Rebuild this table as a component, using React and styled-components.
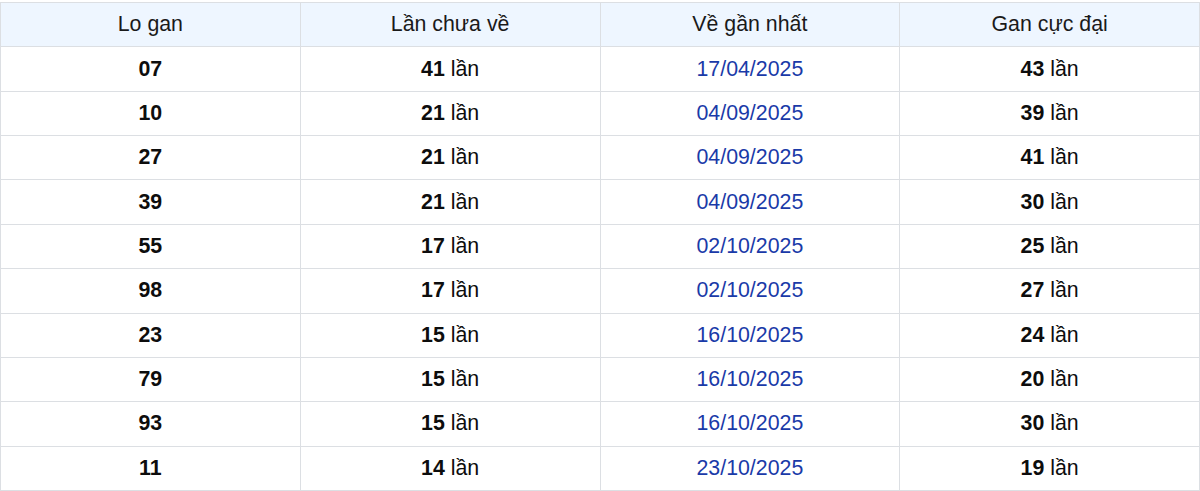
import React from "react";
import styled, { createGlobalStyle } from "styled-components";

const Global = createGlobalStyle`
  html, body { margin: 0; padding: 0; background: #ffffff; }
  body { font-family: "Liberation Sans", Arial, sans-serif; }
`;

const Wrap = styled.div`
  padding-top: 2px;
`;

const Table = styled.table`
  width: 1200px;
  border-collapse: collapse;
  table-layout: fixed;
  font-family: "Liberation Sans", Arial, sans-serif;
  font-size: 21.33px;
  color: #111111;
`;

const Row = styled.tr`
  height: 44.36px;
`;

const HeadCell = styled.th`
  background: #eef6ff;
  font-weight: 400;
  color: #1a1a1a;
  border: 1px solid #dcdfe3;
  text-align: center;
  vertical-align: middle;
  padding: 0;
`;

const Cell = styled.td`
  border: 1px solid #dcdfe3;
  text-align: center;
  vertical-align: middle;
  padding: 0;
  color: ${(p) => (p.$date ? "#1a3aa8" : "#0d0d0d")};
  font-weight: ${(p) => (p.$bold ? 700 : 400)};
`;

const Num = styled.b`
  font-weight: 700;
`;

const rows = [
  ["07", "41", "17/04/2025", "43"],
  ["10", "21", "04/09/2025", "39"],
  ["27", "21", "04/09/2025", "41"],
  ["39", "21", "04/09/2025", "30"],
  ["55", "17", "02/10/2025", "25"],
  ["98", "17", "02/10/2025", "27"],
  ["23", "15", "16/10/2025", "24"],
  ["79", "15", "16/10/2025", "20"],
  ["93", "15", "16/10/2025", "30"],
  ["11", "14", "23/10/2025", "19"],
];

export default function App() {
  return (
    <>
      <Global />
      <Wrap>
        <Table>
          <thead>
            <Row>
              <HeadCell>Lo gan</HeadCell>
              <HeadCell>Lần chưa về</HeadCell>
              <HeadCell>Về gần nhất</HeadCell>
              <HeadCell>Gan cực đại</HeadCell>
            </Row>
          </thead>
          <tbody>
            {rows.map((r) => (
              <Row key={r[0]}>
                <Cell $bold>{r[0]}</Cell>
                <Cell>
                  <Num>{r[1]}</Num> lần
                </Cell>
                <Cell $date>{r[2]}</Cell>
                <Cell>
                  <Num>{r[3]}</Num> lần
                </Cell>
              </Row>
            ))}
          </tbody>
        </Table>
      </Wrap>
    </>
  );
}
